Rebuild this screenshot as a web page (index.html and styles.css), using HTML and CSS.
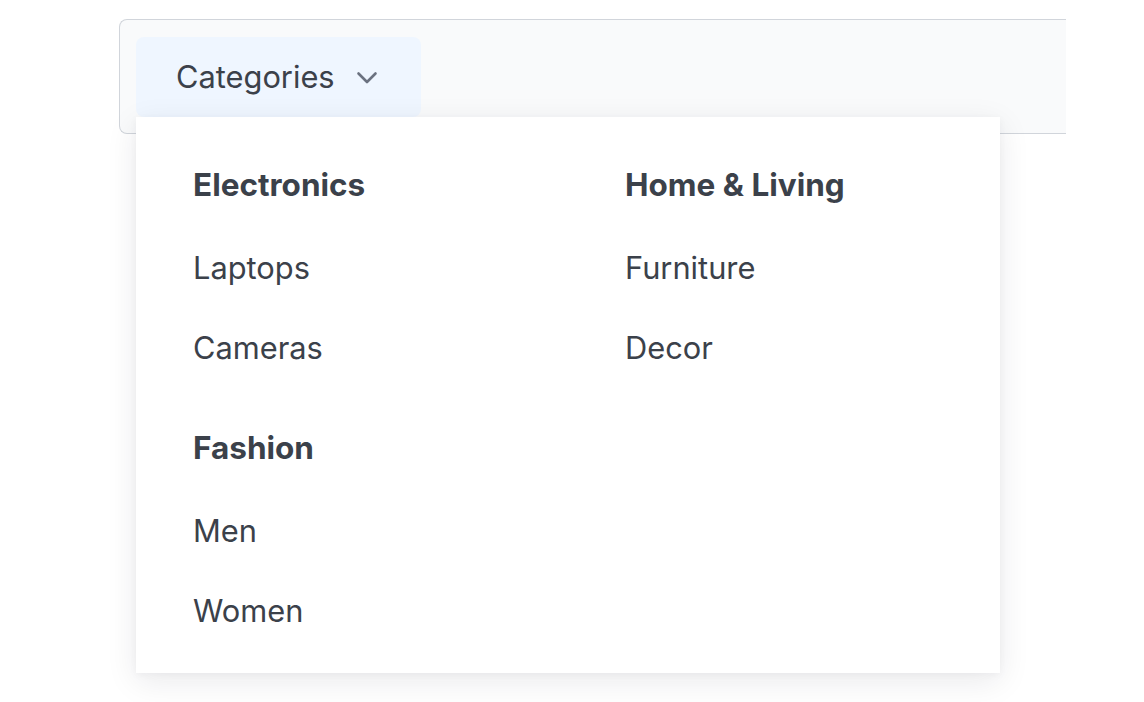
FILE: index.html
```html
<!DOCTYPE html>
<html lang="en">
<head>
<meta charset="utf-8">
<title>Categories menu</title>
<link rel="stylesheet" href="styles.css">
</head>
<body>
<div class="page">
  <nav class="navbar">
    <div class="menu">
      <button class="menu-button" type="button">
        <span class="menu-label">Categories</span>
        <svg class="chevron" width="22" height="13" viewBox="0 0 22 13" aria-hidden="true">
          <path d="M2.5 2.5 L11 11 L19.5 2.5" fill="none" stroke="#6b7280" stroke-width="2.6" stroke-linecap="round" stroke-linejoin="round"/>
        </svg>
      </button>
      <div class="dropdown">
        <section class="group">
          <h3 class="group-title">Electronics</h3>
          <a class="group-item">Laptops</a>
          <a class="group-item">Cameras</a>
        </section>
        <section class="group">
          <h3 class="group-title">Home &amp; Living</h3>
          <a class="group-item">Furniture</a>
          <a class="group-item">Decor</a>
        </section>
        <section class="group">
          <h3 class="group-title">Fashion</h3>
          <a class="group-item">Men</a>
          <a class="group-item">Women</a>
        </section>
      </div>
    </div>
  </nav>
</div>
</body>
</html>
```

FILE: styles.css
```css
* {
  box-sizing: border-box;
}

html, body {
  margin: 0;
  padding: 0;
  background: #ffffff;
  font-family: Inter, "Noto Sans", "Liberation Sans", sans-serif;
  color: #3b414a;
}

.page {
  padding: 19px 0 0 119px;
  overflow: hidden;
  height: 702px;
}

.navbar {
  width: 947px;
  background: #f9fafb;
  border: 1px solid #d1d5db;
  border-right: none;
  border-radius: 8px 0 0 8px;
  padding: 17px 0 16px 16px;
}

.menu {
  position: relative;
  width: 285px;
}

.menu-button {
  display: flex;
  align-items: center;
  gap: 21px;
  height: 80px;
  width: 285px;
  padding: 0 40px;
  border: none;
  border-radius: 8px;
  background: #eff6ff;
  font-family: inherit;
  font-size: 30.8px;
  color: #3b414a;
  cursor: pointer;
}

.menu-label {
  line-height: 40px;
}

.chevron {
  display: block;
  margin-top: 1px;
}

.dropdown {
  position: absolute;
  top: 80px;
  left: 0;
  width: 864px;
  background: #ffffff;
  box-shadow: 0 8px 30px rgba(17, 24, 39, 0.09), 0 2px 8px rgba(17, 24, 39, 0.04);
  padding: 48px 56px 22px 57px;
  display: grid;
  grid-template-columns: 320px 320px;
  column-gap: 112px;
  row-gap: 40px;
  z-index: 10;
}

.group {
  display: flex;
  flex-direction: column;
}

.group-title {
  margin: 0 0 23px 0;
  font-size: 31.5px;
  line-height: 40px;
  font-weight: 700;
  color: #3b414a;
}

.group-item {
  display: block;
  padding: 20px 0;
  font-size: 30.8px;
  line-height: 40px;
  color: #3b414a;
  text-decoration: none;
}
```
